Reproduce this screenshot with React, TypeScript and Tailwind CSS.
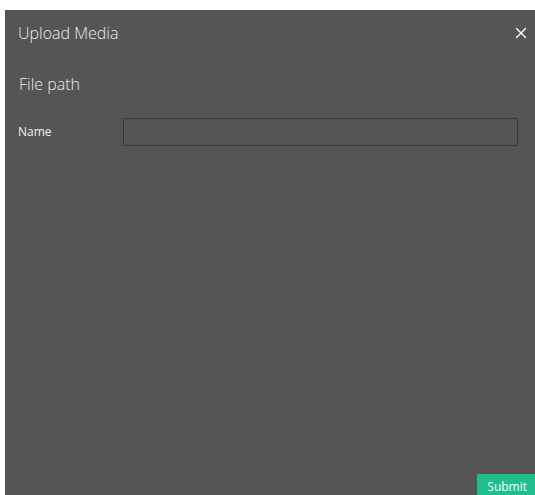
import { X } from "lucide-react"

export default function App() {
  return (
    <div className="h-[495px] w-[535px] overflow-hidden bg-white pl-[5px] pt-[10px] font-['Open_Sans',sans-serif]">
      <div className="flex h-[485px] w-[530px] flex-col bg-[#555555] text-white">
        <div className="flex h-[46px] items-center justify-between pl-[13px] pr-[2px]">
          <h1 className="text-[16px] font-light text-[#ececec]">Upload Media</h1>
          <button className="flex h-6 w-6 items-center justify-center text-white">
            <X className="h-[18px] w-[18px]" strokeWidth={1.8} />
          </button>
        </div>
        <div className="flex-1 px-[13px]">
          <h2 className="mt-[16px] pl-px text-[16px] font-light text-[#ececec]">File path</h2>
          <div className="mt-[22px] flex items-center">
            <label className="w-[105px] text-[12px] text-[#f0f0f0]">Name</label>
            <input
              type="text"
              className="h-[28px] w-[395px] rounded-[2px] border border-[#3a3a3a] bg-transparent px-2 text-[12px] text-white outline-none"
            />
          </div>
        </div>
        <div className="flex h-[21px] justify-end">
          <button className="h-[21px] shrink-0 rounded-tl-[2px] bg-[#1fbe8e] pl-[10px] pr-[8px] pt-[4px] text-[12px] leading-[16px] text-white">
            Submit
          </button>
        </div>
      </div>
    </div>
  )
}
